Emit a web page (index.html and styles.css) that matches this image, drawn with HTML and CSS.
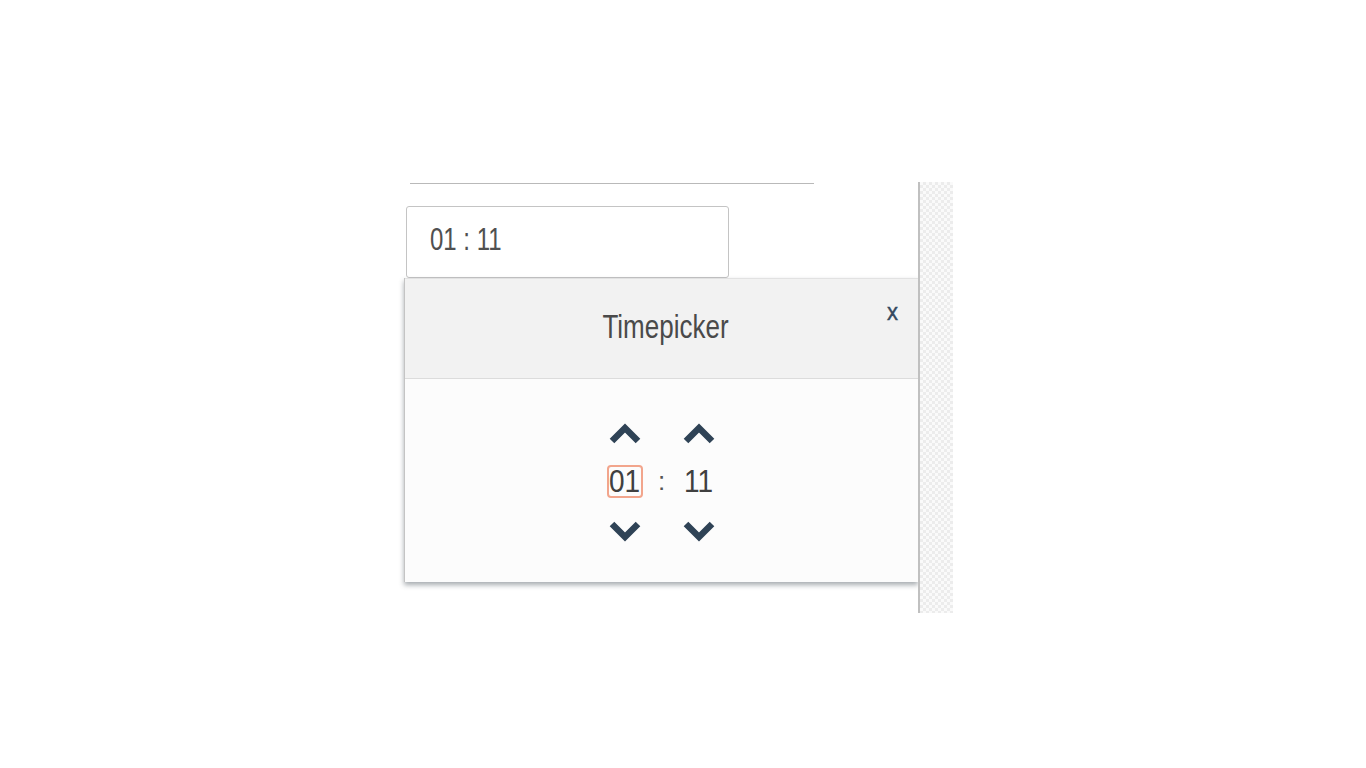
FILE: index.html
```html
<!DOCTYPE html>
<html lang="en">
<head>
<meta charset="utf-8">
<title>Timepicker</title>
<link rel="stylesheet" href="styles.css">
</head>
<body>
<div class="stage">
  <div class="main">
    <div class="rule"></div>
    <div class="field"><span class="field-text">01 : 11</span></div>
    <div class="popup">
      <div class="popup-head">
        <span class="title">Timepicker</span>
        <span class="close">x</span>
      </div>
      <div class="popup-body">
        <div class="picker">
          <div class="col">
            <svg class="chev" viewBox="0 0 32 22" width="32" height="22"><polyline points="3,19 16,6 29,19"/></svg>
            <div class="num active"><span>01</span></div>
            <svg class="chev" viewBox="0 0 32 22" width="32" height="22"><polyline points="3,4 16,17 29,4"/></svg>
          </div>
          <div class="sep"><span>:</span></div>
          <div class="col">
            <svg class="chev" viewBox="0 0 32 22" width="32" height="22"><polyline points="3,19 16,6 29,19"/></svg>
            <div class="num"><span>11</span></div>
            <svg class="chev" viewBox="0 0 32 22" width="32" height="22"><polyline points="3,4 16,17 29,4"/></svg>
          </div>
        </div>
      </div>
    </div>
  </div>
  <div class="strip"></div>
</div>
</body>
</html>
```

FILE: styles.css
```css
html, body {
  margin: 0;
  padding: 0;
  background: #ffffff;
  font-family: "Liberation Sans", Arial, sans-serif;
}

.stage {
  display: flex;
  align-items: flex-start;
  padding-top: 182px;
  padding-left: 404px;
}

.main {
  width: 514px;
  display: flex;
  flex-direction: column;
}

.rule {
  margin-left: 6px;
  width: 404px;
  height: 1px;
  margin-top: 1px;
  background: #b9b9b9;
}

.field {
  margin-top: 22px;
  margin-left: 2px;
  width: 323px;
  height: 72px;
  box-sizing: border-box;
  border: 1px solid #c4c4c4;
  border-radius: 3px;
  display: flex;
  align-items: center;
  padding-left: 23px;
  background: #fff;
}

.field-text {
  display: inline-block;
  font-size: 24px;
  color: #505050;
  transform: scaleY(1.28);
  margin-top: -4px;
}

.popup {
  width: 513px;
  border-left: 1px solid #c4c4c4;
  box-shadow: 0 3px 5px rgba(60, 70, 80, 0.45);
  background: #fcfcfc;
  display: flex;
  flex-direction: column;
}

.popup-head {
  position: relative;
  height: 99px;
  background: #f2f2f2;
  border-bottom: 1px solid #dcdcdc;
  border-top: 1px solid #e2e2e2;
  display: flex;
  align-items: center;
  justify-content: center;
  padding-left: 8px;
}

.title {
  display: inline-block;
  font-size: 26px;
  color: #4a4a4a;
  transform: scaleY(1.3);
  margin-top: -4px;
}

.close {
  position: absolute;
  right: 20px;
  top: 20px;
  display: inline-block;
  font-size: 22px;
  color: #34495e;
  transform: scaleY(1.1);
  -webkit-text-stroke: 0.4px #34495e;
}

.popup-body {
  height: 203px;
  display: flex;
  justify-content: center;
}

.picker {
  display: flex;
  padding-top: 43px;
}

.col {
  width: 40px;
  display: flex;
  flex-direction: column;
  align-items: center;
}

.chev {
  display: block;
  fill: none;
  stroke: #2f4356;
  stroke-width: 6.5;
  stroke-linejoin: miter;
  stroke-linecap: butt;
}

.num {
  margin-top: 21px;
  margin-bottom: 22px;
  width: 36px;
  height: 33px;
  box-sizing: border-box;
  border: 2px solid transparent;
  border-radius: 4px;
  display: flex;
  align-items: center;
  justify-content: center;
  font-size: 28px;
  color: #404040;
}

.num span {
  display: inline-block;
  transform: scaleY(1.12);
}

.num.active {
  border-color: #f2a58c;
}

.sep {
  width: 34px;
  height: 33px;
  margin-top: 43px;
  display: flex;
  justify-content: center;
  align-items: center;
  font-size: 26px;
  color: #555;
}

.strip {
  width: 33px;
  height: 431px;
  border-left: 2px solid #c0c0c0;
  background-color: #fafafa;
  background-image:
    linear-gradient(45deg, #ececec 25%, transparent 25%, transparent 75%, #ececec 75%),
    linear-gradient(45deg, #ececec 25%, transparent 25%, transparent 75%, #ececec 75%);
  background-size: 6px 6px;
  background-position: 0 0, 3px 3px;
}
```
